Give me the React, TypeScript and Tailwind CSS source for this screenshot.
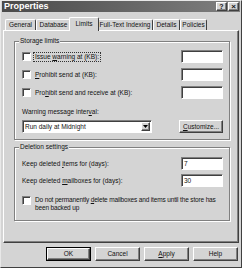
import React from "react";

const font = "font-['Liberation_Sans',Arial,sans-serif]";

function Sunken({ className = "", children }: { className?: string; children?: React.ReactNode }) {
  return (
    <div
      className={`bg-white border border-t-[#808080] border-l-[#808080] border-b-white border-r-white shadow-[inset_1px_1px_0_#404040] ${className}`}
    >
      {children}
    </div>
  );
}

function Raised({ className = "", children }: { className?: string; children?: React.ReactNode }) {
  return (
    <div
      className={`bg-[#d4d4d4] border border-t-white border-l-white border-b-[#404040] border-r-[#404040] shadow-[inset_-1px_-1px_0_#808080] flex items-center justify-center ${className}`}
    >
      {children}
    </div>
  );
}

function Check() {
  return <Sunken className="w-[9px] h-[9px] shrink-0" />;
}

function Group({ label, className = "", children }: { label: string; className?: string; children: React.ReactNode }) {
  return (
    <div
      className={`relative border border-[#808080] shadow-[inset_1px_1px_0_#fff,1px_1px_0_#fff] ${className}`}
    >
      <span className="absolute left-[4px] -top-[5px] bg-[#d4d4d4] px-[1px] leading-[8px]">{label}</span>
      {children}
    </div>
  );
}

function Tab({ w, label, active = false }: { w: string; label: string; active?: boolean }) {
  return (
    <div
      className={`${w} flex items-center justify-center border-t border-l border-r border-t-white border-l-white border-r-[#404040] rounded-t-[2px] bg-[#d4d4d4] ${
        active ? "h-[14px] -mb-[1px] -mx-[2px] relative z-10 pb-[2px]" : "h-[11px]"
      }`}
    >
      {label}
    </div>
  );
}

export default function App() {
  return (
    <div
      className={`${font} w-[242px] h-[268px] bg-[#d4d4d4] border border-t-[#e8e8e8] border-l-[#e8e8e8] border-r-[#404040] border-b-[#404040] text-[6.5px] text-[#111] flex flex-col overflow-hidden`}
    >
      {/* title bar */}
      <div className="h-[11px] mx-[1px] bg-gradient-to-r from-[#4a4a4a] to-[#808080] flex items-center pl-[2px] pr-[1px]">
        <span className="text-white font-bold text-[9px] leading-[11px] flex-1">Properties</span>
        <Raised className="w-[11px] h-[9px] text-[7px] font-bold leading-none">?</Raised>
        <Raised className="w-[11px] h-[9px] ml-[1px] text-[8px] font-bold leading-none">×</Raised>
      </div>

      {/* tabs */}
      <div className="h-[18px] flex items-end pl-[4px] leading-[8px]">
        <Tab w="w-[31px]" label="General" />
        <Tab w="w-[35px]" label="Database" />
        <Tab w="w-[30px]" label="Limits" active />
        <Tab w="w-[56px]" label="Full-Text Indexing" />
        <Tab w="w-[27px]" label="Details" />
        <Tab w="w-[27px]" label="Policies" />
      </div>

      {/* panel */}
      <div className="h-[213px] ml-[2px] mr-[2px] border border-t-white border-l-white border-r-[#404040] border-b-[#404040] shadow-[inset_-1px_-1px_0_#808080] pl-[10px] pr-[8px] pt-[10px] leading-[8px]">
        <Group label="Storage limits" className="h-[99px] pl-[7px] pr-[6px] pt-[8px]">
          <div className="flex flex-col gap-[5px]">
            <div className="flex items-center h-[13px]">
              <Check />
              <span className="ml-[2px] px-[1px] border border-dotted border-[#333]">
                Issue <u>w</u>arning at (KB):
              </span>
              <Sunken className="ml-auto w-[42px] h-[13px]" />
            </div>
            <div className="flex items-center h-[13px]">
              <Check />
              <span className="ml-[3px] px-[1px]">
                <u>P</u>rohibit send at (KB):
              </span>
              <Sunken className="ml-auto w-[42px] h-[13px]" />
            </div>
            <div className="flex items-center h-[13px]">
              <Check />
              <span className="ml-[3px] px-[1px]">
                Pro<u>h</u>ibit send and receive at (KB):
              </span>
              <Sunken className="ml-auto w-[42px] h-[13px]" />
            </div>
          </div>
          <div className="mt-[9px]">
            Warning message inter<u>v</u>al:
          </div>
          <div className="mt-[4px] flex items-center">
            <Sunken className="w-[130px] h-[13px] flex items-center pl-[2px]">
              <span className="flex-1">Run daily at Midnight</span>
              <Raised className="w-[9px] h-[9px] mr-[1px]">
                <svg width="5" height="3" viewBox="0 0 5 3">
                  <path d="M0 0h5L2.5 3z" fill="#000" />
                </svg>
              </Raised>
            </Sunken>
            <Raised className="ml-auto w-[44px] h-[13px]">
              <span>
                <u>C</u>ustomize...
              </span>
            </Raised>
          </div>
        </Group>

        <Group label="Deletion settings" className="mt-[7px] h-[74px] pl-[7px] pr-[6px] pt-[9px]">
          <div className="flex items-center h-[13px]">
            <span>
              Keep deleted <u>i</u>tems for (days):
            </span>
            <Sunken className="ml-auto w-[42px] h-[13px] pl-[2px] flex items-center">7</Sunken>
          </div>
          <div className="mt-[4px] flex items-center h-[13px]">
            <span>
              Keep deleted <u>m</u>ailboxes for (days):
            </span>
            <Sunken className="ml-auto w-[42px] h-[13px] pl-[2px] flex items-center">30</Sunken>
          </div>
          <div className="mt-[9px] flex items-start">
            <Check />
            <span className="ml-[3px] px-[1px] leading-[8px] whitespace-nowrap tracking-[-0.15px]">
              Do not permanently <u>d</u>elete mailboxes and items until the store has
              <br />
              been backed up
            </span>
          </div>
        </Group>
      </div>

      {/* buttons */}
      <div className="mt-[4px] flex pl-[45px] gap-[4px]">
        <div className="border border-black">
          <Raised className="w-[43px] h-[12px]">OK</Raised>
        </div>
        <Raised className="w-[45px] h-[14px]">Cancel</Raised>
        <Raised className="w-[45px] h-[14px]">
          <span>
            <u>A</u>pply
          </span>
        </Raised>
        <Raised className="w-[45px] h-[14px]">Help</Raised>
      </div>
    </div>
  );
}
